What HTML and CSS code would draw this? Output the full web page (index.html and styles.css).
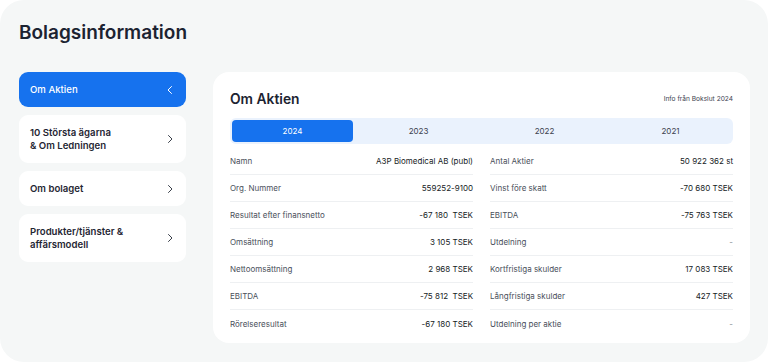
FILE: index.html
```html
<!DOCTYPE html>
<html lang="sv">
<head>
    <meta charset="UTF-8">
    <meta name="viewport" content="width=device-width, initial-scale=1.0">
    <title>Bolagsinformation</title>
    <link rel="stylesheet" href="styles.css">
</head>
<body>
    <div class="panel">
        <h1 class="panel-title">Bolagsinformation</h1>

        <div class="panel-body">
            <nav class="side-menu">
                <a class="menu-item active" href="#">
                    <span>Om Aktien</span>
                    <svg class="chev" viewBox="0 0 10 10"><path d="M6.5 1.5 L3 5 L6.5 8.5"/></svg>
                </a>
                <a class="menu-item tall" href="#">
                    <span>10 Största ägarna<br>&amp; Om Ledningen</span>
                    <svg class="chev" viewBox="0 0 10 10"><path d="M3.5 1.5 L7 5 L3.5 8.5"/></svg>
                </a>
                <a class="menu-item" href="#">
                    <span>Om bolaget</span>
                    <svg class="chev" viewBox="0 0 10 10"><path d="M3.5 1.5 L7 5 L3.5 8.5"/></svg>
                </a>
                <a class="menu-item tall" href="#">
                    <span>Produkter/tjänster &amp;<br>affärsmodell</span>
                    <svg class="chev" viewBox="0 0 10 10"><path d="M3.5 1.5 L7 5 L3.5 8.5"/></svg>
                </a>
            </nav>

            <section class="info-card">
                <div class="card-header">
                    <h2 class="card-title">Om Aktien</h2>
                    <span class="card-source">Info från Bokslut 2024</span>
                </div>

                <div class="year-tabs">
                    <button class="year-tab active">2024</button>
                    <button class="year-tab">2023</button>
                    <button class="year-tab">2022</button>
                    <button class="year-tab">2021</button>
                </div>

                <div class="data-grid">
                    <div class="data-col">
                        <div class="data-row"><span class="label">Namn</span><span class="value">A3P Biomedical AB (publ)</span></div>
                        <div class="data-row"><span class="label">Org. Nummer</span><span class="value">559252-9100</span></div>
                        <div class="data-row"><span class="label">Resultat efter finansnetto</span><span class="value">-67 180&nbsp; TSEK</span></div>
                        <div class="data-row"><span class="label">Omsättning</span><span class="value">3 105 TSEK</span></div>
                        <div class="data-row"><span class="label">Nettoomsättning</span><span class="value">2 968 TSEK</span></div>
                        <div class="data-row"><span class="label">EBITDA</span><span class="value">-75 812&nbsp; TSEK</span></div>
                        <div class="data-row"><span class="label">Rörelseresultat</span><span class="value">-67 180 TSEK</span></div>
                    </div>
                    <div class="data-col">
                        <div class="data-row"><span class="label">Antal Aktier</span><span class="value">50 922 362 st</span></div>
                        <div class="data-row"><span class="label">Vinst före skatt</span><span class="value">-70 680 TSEK</span></div>
                        <div class="data-row"><span class="label">EBITDA</span><span class="value">-75 763 TSEK</span></div>
                        <div class="data-row"><span class="label">Utdelning</span><span class="value muted">-</span></div>
                        <div class="data-row"><span class="label">Kortfristiga skulder</span><span class="value">17 083 TSEK</span></div>
                        <div class="data-row"><span class="label">Långfristiga skulder</span><span class="value">427 TSEK</span></div>
                        <div class="data-row"><span class="label">Utdelning per aktie</span><span class="value muted">-</span></div>
                    </div>
                </div>
            </section>
        </div>
    </div>
</body>
</html>
```

FILE: styles.css
```css
body {
    font-family: Inter, "Noto Sans", sans-serif;
    margin: 0;
    background: #ffffff;
    color: #1d2330;
}
.panel {
    width: 768px;
    height: 362px;
    box-sizing: border-box;
    background: #f5f7f7;
    border-radius: 24px;
    padding: 21px 18px 0 19px;
}
.panel-title {
    margin: 0;
    font-size: 19px;
    font-weight: 600;
    line-height: 24px;
    color: #1c2331;
}
.panel-body {
    display: flex;
    gap: 27px;
    margin-top: 27px;
}
.side-menu {
    width: 167px;
    display: flex;
    flex-direction: column;
    gap: 8px;
}
.menu-item {
    display: flex;
    align-items: center;
    justify-content: space-between;
    height: 35px;
    padding: 0 11px 0 11px;
    background: #ffffff;
    border-radius: 9px;
    font-size: 9.6px;
    font-weight: 600;
    line-height: 13px;
    color: #1f2633;
    text-decoration: none;
}
.menu-item.tall {
    height: 48px;
}
.menu-item.active {
    background: #1672ee;
    color: #ffffff;
    font-weight: 500;
}
.chev {
    width: 10px;
    height: 10px;
    fill: none;
    stroke: #3a404b;
    stroke-width: 1;
    stroke-linecap: round;
    stroke-linejoin: round;
}
.menu-item.active .chev {
    stroke: #ffffff;
}
.info-card {
    width: 537px;
    height: 271px;
    box-sizing: border-box;
    background: #ffffff;
    border-radius: 16px;
    padding: 17px 17px 0 17px;
}
.card-header {
    display: flex;
    align-items: center;
    justify-content: space-between;
    height: 20px;
}
.card-title {
    margin: 0;
    font-size: 13.8px;
    font-weight: 600;
    color: #1c2331;
}
.card-source {
    font-size: 6.6px;
    color: #3d4350;
}
.year-tabs {
    display: grid;
    grid-template-columns: repeat(4, 1fr);
    gap: 5px;
    margin-top: 9px;
    padding: 2px;
    height: 26px;
    box-sizing: border-box;
    background: #eaf2fd;
    border-radius: 6px;
}
.year-tab {
    border: none;
    background: transparent;
    font-family: inherit;
    font-size: 8px;
    color: #3b414d;
    border-radius: 4px;
    padding: 0;
}
.year-tab.active {
    background: #1672ee;
    color: #ffffff;
}
.data-grid {
    display: grid;
    grid-template-columns: 1fr 1fr;
    gap: 17px;
    margin-top: 4px;
}
.data-row {
    display: flex;
    align-items: center;
    justify-content: space-between;
    height: 27px;
    box-sizing: border-box;
    border-bottom: 1px solid #eef0f2;
    font-size: 8px;
}
.data-row:last-child {
    border-bottom: none;
}
.label {
    color: #4a505b;
}
.value {
    color: #161b24;
    font-weight: 400;
}
.value.muted {
    color: #8a8f97;
}
```
